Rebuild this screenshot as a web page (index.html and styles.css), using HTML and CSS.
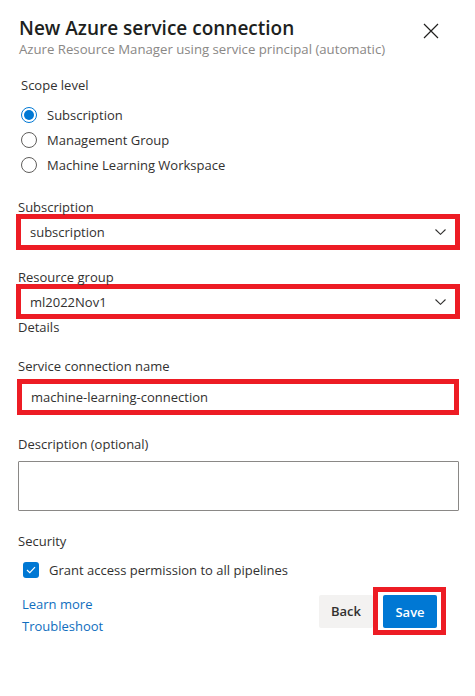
FILE: index.html
```html
<!DOCTYPE html>
<html>
<head>
<meta charset="utf-8">
<link rel="stylesheet" href="styles.css">
</head>
<body>
<div class="panel">
  <div class="header">
    <div class="titles">
      <div class="title">New Azure service connection</div>
      <div class="subtitle">Azure Resource Manager using service principal (automatic)</div>
    </div>
    <svg class="close" width="16" height="16" viewBox="0 0 16 16"><path d="M1 1L15 15M15 1L1 15" stroke="#201f1e" stroke-width="1.2" fill="none"/></svg>
  </div>

  <div class="label scope">Scope level</div>
  <div class="radios">
    <div class="radio"><span class="circle checked"></span><span>Subscription</span></div>
    <div class="radio"><span class="circle"></span><span>Management Group</span></div>
    <div class="radio"><span class="circle"></span><span>Machine Learning Workspace</span></div>
  </div>

  <div class="label l-sub">Subscription</div>
  <div class="field red">
    <span>subscription</span>
    <svg class="chev" width="11" height="6" viewBox="0 0 11 6"><path d="M0.5 0.5L5.5 5.3L10.5 0.5" stroke="#323130" stroke-width="1.1" fill="none"/></svg>
  </div>

  <div class="label l-rg">Resource group</div>
  <div class="field red rg">
    <span>ml2022Nov1</span>
    <svg class="chev" width="11" height="6" viewBox="0 0 11 6"><path d="M0.5 0.5L5.5 5.3L10.5 0.5" stroke="#323130" stroke-width="1.1" fill="none"/></svg>
  </div>
  <div class="label l-details">Details</div>

  <div class="label l-name">Service connection name</div>
  <div class="field red name">
    <span>machine-learning-connection</span>
  </div>

  <div class="label l-desc">Description (optional)</div>
  <div class="textarea"></div>

  <div class="label l-sec">Security</div>
  <div class="check">
    <span class="box"><svg width="10" height="8" viewBox="0 0 10 8"><path d="M1 4L3.8 6.6L9 1.2" stroke="#fff" stroke-width="1.2" fill="none"/></svg></span>
    <span>Grant access permission to all pipelines</span>
  </div>

  <div class="footer">
    <div class="links">
      <a class="link">Learn more</a>
      <a class="link">Troubleshoot</a>
    </div>
    <div class="buttons">
      <div class="btn back">Back</div>
      <div class="save-wrap"><div class="btn save">Save</div></div>
    </div>
  </div>
</div>
</body>
</html>
```

FILE: styles.css
```css
html, body {
  margin: 0;
  padding: 0;
  background: #fff;
}
body {
  font-family: "Open Sans", "Noto Sans", sans-serif;
  color: #323130;
  font-size: 13px;
}
.panel {
  width: 475px;
  box-sizing: border-box;
}
.header {
  display: flex;
  justify-content: space-between;
  padding: 14px 36px 0 19px;
}
.title {
  font-size: 19px;
  font-weight: 600;
  color: #201f1e;
  line-height: 28px;
}
.subtitle {
  font-size: 13.2px;
  color: #8a8886;
  line-height: 16px;
  margin-top: -1px;
}
.close {
  margin-top: 9px;
}
.label {
  line-height: 14px;
  margin-left: 18px;
  color: #323130;
}
.scope { margin-top: 21px; margin-left: 21px; }
.radios {
  margin-top: 14px;
  margin-left: 21px;
  display: flex;
  flex-direction: column;
  gap: 7px;
}
.radio {
  display: flex;
  align-items: center;
  gap: 10px;
  height: 18px;
}
.circle {
  width: 14px;
  height: 14px;
  border: 1px solid #605e5c;
  border-radius: 50%;
  box-sizing: content-box;
  position: relative;
}
.circle.checked {
  border-color: #0078d4;
}
.circle.checked::after {
  content: "";
  position: absolute;
  left: 2px;
  top: 2px;
  width: 10px;
  height: 10px;
  border-radius: 50%;
  background: #0078d4;
}
.l-sub { margin-top: 26px; }
.field {
  margin: 0 15px 0 16px;
  height: 36px;
  box-sizing: border-box;
  border: 5px solid #ed1c24;
  display: flex;
  align-items: center;
  justify-content: space-between;
  padding: 0 9px 0 9px;
}
.l-rg { margin-top: 20px; }
.field.rg { height: 35px; }
.l-details { margin-top: 1px; }
.l-name { margin-top: 25px; }
.field.name { margin-left: 17px; margin-right: 16px; margin-top: 6px; }
.l-desc { margin-top: 22px; }
.textarea {
  margin: 10px 16px 0 18px;
  height: 50px;
  box-sizing: border-box;
  border: 1px solid #8a8886;
  border-radius: 1px;
}
.l-sec { margin-top: 23px; }
.check {
  margin: 13px 0 0 23px;
  display: flex;
  align-items: center;
  gap: 10px;
  height: 18px;
}
.box {
  width: 16px;
  height: 16px;
  border-radius: 3px;
  background: #0078d4;
  display: flex;
  align-items: center;
  justify-content: center;
}
.footer {
  display: flex;
  justify-content: space-between;
  align-items: flex-start;
  margin-top: 8px;
  padding: 0 29px 0 22px;
}
.links {
  display: flex;
  flex-direction: column;
  margin-top: 8px;
  gap: 4px;
}
.link {
  color: #106ebe;
  line-height: 18px;
}
.buttons {
  display: flex;
  align-items: center;
}
.btn {
  height: 33px;
  width: 54px;
  border-radius: 2px;
  display: flex;
  align-items: center;
  justify-content: center;
  font-weight: 600;
  font-size: 13px;
}
.back {
  background: #f3f2f1;
  color: #323130;
}
.save-wrap {
  border: 5px solid #ed1c24;
  padding: 3px 4px 2px 5px;
}
.save {
  background: #0078d4;
  color: #fff;
}
```
